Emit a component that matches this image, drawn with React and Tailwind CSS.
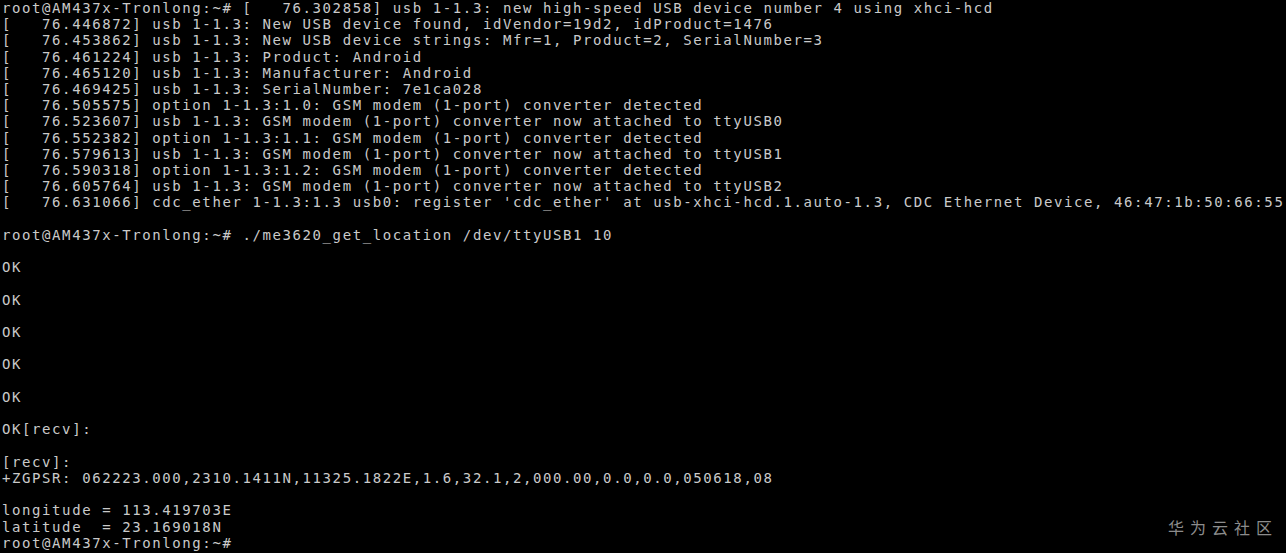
import React from "react";

const lines = [
  "root@AM437x-Tronlong:~# [   76.302858] usb 1-1.3: new high-speed USB device number 4 using xhci-hcd",
  "[   76.446872] usb 1-1.3: New USB device found, idVendor=19d2, idProduct=1476",
  "[   76.453862] usb 1-1.3: New USB device strings: Mfr=1, Product=2, SerialNumber=3",
  "[   76.461224] usb 1-1.3: Product: Android",
  "[   76.465120] usb 1-1.3: Manufacturer: Android",
  "[   76.469425] usb 1-1.3: SerialNumber: 7e1ca028",
  "[   76.505575] option 1-1.3:1.0: GSM modem (1-port) converter detected",
  "[   76.523607] usb 1-1.3: GSM modem (1-port) converter now attached to ttyUSB0",
  "[   76.552382] option 1-1.3:1.1: GSM modem (1-port) converter detected",
  "[   76.579613] usb 1-1.3: GSM modem (1-port) converter now attached to ttyUSB1",
  "[   76.590318] option 1-1.3:1.2: GSM modem (1-port) converter detected",
  "[   76.605764] usb 1-1.3: GSM modem (1-port) converter now attached to ttyUSB2",
  "[   76.631066] cdc_ether 1-1.3:1.3 usb0: register 'cdc_ether' at usb-xhci-hcd.1.auto-1.3, CDC Ethernet Device, 46:47:1b:50:66:55",
  "",
  "root@AM437x-Tronlong:~# ./me3620_get_location /dev/ttyUSB1 10",
  "",
  "OK",
  "",
  "OK",
  "",
  "OK",
  "",
  "OK",
  "",
  "OK",
  "",
  "OK[recv]:",
  "",
  "[recv]:",
  "+ZGPSR: 062223.000,2310.1411N,11325.1822E,1.6,32.1,2,000.00,0.0,0.0,050618,08",
  "",
  "longitude = 113.419703E",
  "latitude  = 23.169018N",
  "root@AM437x-Tronlong:~#",
];

export default function App() {
  return (
    <div className="relative w-full h-[553px] bg-black overflow-hidden">
      <div
        className="pl-[2px] text-[14px] leading-[16.21px] tracking-[1.59px] text-[#cacaca] whitespace-pre"
        style={{ fontFamily: '"DejaVu Sans Mono", monospace' }}
      >
        {lines.map((l, i) => (
          <div key={i} className="h-[16.21px]">
            {l || " "}
          </div>
        ))}
      </div>
      <div
        className="absolute right-[8px] bottom-[16px] text-[16px] leading-[20px] tracking-[6px] text-[#8c8c8c]"
        style={{ fontFamily: '"Noto Sans CJK SC", sans-serif' }}
      >
        华为云社区
      </div>
    </div>
  );
}
